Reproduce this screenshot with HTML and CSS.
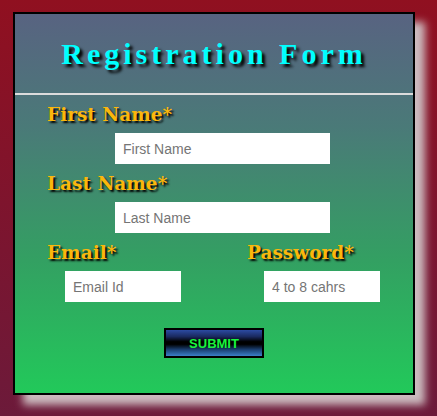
FILE: index.html
```html
<!DOCTYPE html>
<html>
<head>
<meta charset="utf-8">
<link rel="stylesheet" href="styles.css">
</head>
<body>
<form class="card">
  <div class="header">
    <h1 class="title">Registration Form</h1>
  </div>
  <div class="rule"></div>
  <div class="content">
    <div class="field">
      <label class="label">First Name*</label>
      <input class="input input-wide" type="text" placeholder="First Name">
    </div>
    <div class="field">
      <label class="label">Last Name*</label>
      <input class="input input-wide" type="text" placeholder="Last Name">
    </div>
    <div class="pair">
      <div class="col">
        <label class="label">Email*</label>
        <input class="input input-email" type="text" placeholder="Email Id">
      </div>
      <div class="col">
        <label class="label">Password*</label>
        <input class="input input-pass" type="text" placeholder="4 to 8 cahrs">
      </div>
    </div>
    <div class="actions">
      <button class="submit" type="button">SUBMIT</button>
    </div>
  </div>
</form>
</body>
</html>
```

FILE: styles.css
```css
* { box-sizing: border-box; }
html, body { height: 100%; }
body {
  margin: 0;
  padding: 12px 0 0 13px;
  background: linear-gradient(to bottom, #901020 0%, #7a1530 60%, #6c1a3a 100%);
  font-family: "Liberation Sans", Arial, sans-serif;
  overflow: hidden;
}
.card {
  display: flex;
  flex-direction: column;
  width: 402px;
  height: 383px;
  border: 2px solid #000;
  background: linear-gradient(to bottom, #586381 0%, #4a7a78 30%, #33a062 65%, #22c95a 100%);
  box-shadow: 10px 10px 8px #cdbcc0;
  margin: 0;
}
.header {
  height: 79px;
  display: flex;
  align-items: center;
  justify-content: center;
}
.title {
  margin: 0;
  font-family: "Liberation Serif", "Times New Roman", serif;
  font-weight: bold;
  font-size: 30px;
  line-height: 30px;
  letter-spacing: 4px;
  color: #00ffff;
  text-shadow: 3px 3px 3px #000;
}
.rule {
  height: 2px;
  background: #dcdcdc;
}
.content {
  display: flex;
  flex-direction: column;
  gap: 8px;
  padding: 8px 0 0 32px;
}
.field {
  display: flex;
  flex-direction: column;
  align-items: flex-start;
}
.label {
  display: block;
  font-family: "DejaVu Serif", Georgia, serif;
  font-weight: bold;
  font-size: 18.5px;
  line-height: 24px;
  color: #fbb70c;
  text-shadow: 2px 2px 2px #000;
  margin-bottom: 6px;
}
.input {
  height: 31px;
  border: none;
  outline: none;
  background: #fff;
  padding: 0 8px;
  font-family: "Liberation Sans", Arial, sans-serif;
  font-size: 14px;
  color: #333;
}
.input::placeholder { color: #757575; }
.input-wide { width: 215px; margin-left: 68px; }
.pair {
  display: grid;
  grid-template-columns: 200px 1fr;
}
.col {
  display: flex;
  flex-direction: column;
  align-items: flex-start;
}
.input-email { width: 116px; margin-left: 18px; }
.input-pass { width: 116px; margin-left: 17px; }
.actions {
  padding-top: 18px;
  padding-left: 117px;
}
.submit {
  width: 100px;
  height: 30px;
  border: 2px solid #000;
  padding: 0;
  background: linear-gradient(to bottom, #2c4ba2 0%, #1a2a60 25%, #000 45%, #000 55%, #1a3e70 75%, #3b7fc8 100%);
  color: #19f53c;
  font-family: "Liberation Sans", Arial, sans-serif;
  font-weight: bold;
  font-size: 13px;
  cursor: pointer;
}
```
